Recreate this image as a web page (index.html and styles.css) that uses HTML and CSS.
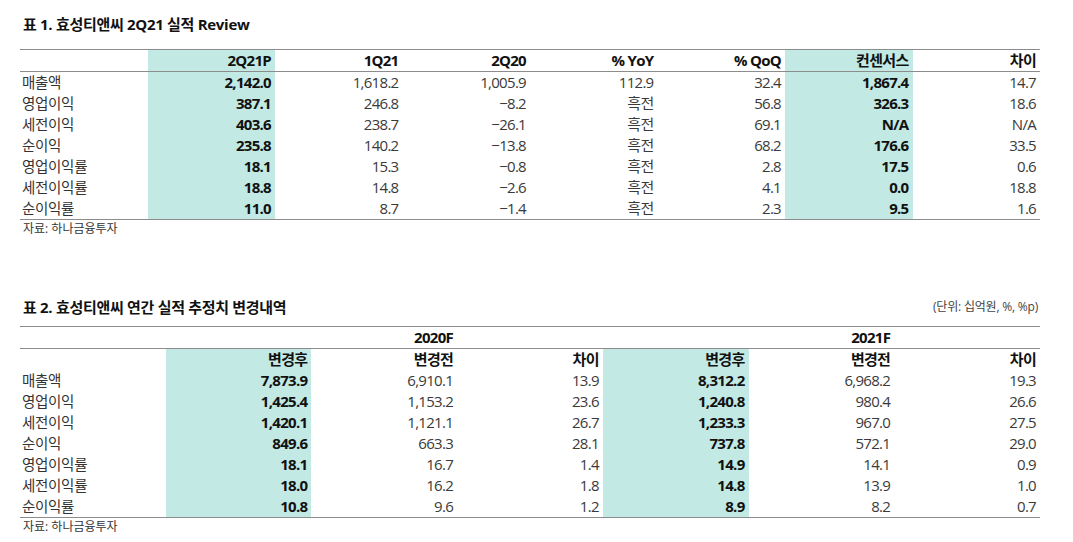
FILE: index.html
```html
<!DOCTYPE html>
<html lang="ko">
<head>
<meta charset="utf-8">
<link rel="stylesheet" href="styles.css">
</head>
<body>
<div class="page">
  <section class="block">
    <div class="title-row">
      <div class="title">표 1. 효성티앤씨 2Q21 실적 Review</div>
    </div>
    <table class="t1">
      <thead>
        <tr>
          <th class="lbl"></th>
          <th class="hl">2Q21P</th>
          <th>1Q21</th>
          <th>2Q20</th>
          <th>% YoY</th>
          <th>% QoQ</th>
          <th class="hl">컨센서스</th>
          <th>차이</th>
        </tr>
      </thead>
      <tbody>
        <tr><td class="lbl">매출액</td><td class="hl b">2,142.0</td><td>1,618.2</td><td>1,005.9</td><td>112.9</td><td>32.4</td><td class="hl b">1,867.4</td><td>14.7</td></tr>
        <tr><td class="lbl">영업이익</td><td class="hl b">387.1</td><td>246.8</td><td>−8.2</td><td>흑전</td><td>56.8</td><td class="hl b">326.3</td><td>18.6</td></tr>
        <tr><td class="lbl">세전이익</td><td class="hl b">403.6</td><td>238.7</td><td>−26.1</td><td>흑전</td><td>69.1</td><td class="hl b">N/A</td><td>N/A</td></tr>
        <tr><td class="lbl">순이익</td><td class="hl b">235.8</td><td>140.2</td><td>−13.8</td><td>흑전</td><td>68.2</td><td class="hl b">176.6</td><td>33.5</td></tr>
        <tr><td class="lbl">영업이익률</td><td class="hl b">18.1</td><td>15.3</td><td>−0.8</td><td>흑전</td><td>2.8</td><td class="hl b">17.5</td><td>0.6</td></tr>
        <tr><td class="lbl">세전이익률</td><td class="hl b">18.8</td><td>14.8</td><td>−2.6</td><td>흑전</td><td>4.1</td><td class="hl b">0.0</td><td>18.8</td></tr>
        <tr class="last"><td class="lbl">순이익률</td><td class="hl b">11.0</td><td>8.7</td><td>−1.4</td><td>흑전</td><td>2.3</td><td class="hl b">9.5</td><td>1.6</td></tr>
      </tbody>
    </table>
    <div class="source">자료: 하나금융투자</div>
  </section>

  <section class="block second">
    <div class="title-row">
      <div class="title">표 2. 효성티앤씨 연간 실적 추정치 변경내역</div>
      <div class="unit">(단위: 십억원, %, %p)</div>
    </div>
    <table class="t2">
      <thead>
        <tr class="year">
          <th class="lbl"></th>
          <th></th>
          <th>2020F</th>
          <th></th>
          <th></th>
          <th>2021F</th>
          <th></th>
        </tr>
        <tr class="sub">
          <th class="lbl"></th>
          <th class="hl">변경후</th>
          <th>변경전</th>
          <th>차이</th>
          <th class="hl">변경후</th>
          <th>변경전</th>
          <th>차이</th>
        </tr>
      </thead>
      <tbody>
        <tr><td class="lbl">매출액</td><td class="hl b">7,873.9</td><td>6,910.1</td><td>13.9</td><td class="hl b">8,312.2</td><td>6,968.2</td><td>19.3</td></tr>
        <tr><td class="lbl">영업이익</td><td class="hl b">1,425.4</td><td>1,153.2</td><td>23.6</td><td class="hl b">1,240.8</td><td>980.4</td><td>26.6</td></tr>
        <tr><td class="lbl">세전이익</td><td class="hl b">1,420.1</td><td>1,121.1</td><td>26.7</td><td class="hl b">1,233.3</td><td>967.0</td><td>27.5</td></tr>
        <tr><td class="lbl">순이익</td><td class="hl b">849.6</td><td>663.3</td><td>28.1</td><td class="hl b">737.8</td><td>572.1</td><td>29.0</td></tr>
        <tr><td class="lbl">영업이익률</td><td class="hl b">18.1</td><td>16.7</td><td>1.4</td><td class="hl b">14.9</td><td>14.1</td><td>0.9</td></tr>
        <tr><td class="lbl">세전이익률</td><td class="hl b">18.0</td><td>16.2</td><td>1.8</td><td class="hl b">14.8</td><td>13.9</td><td>1.0</td></tr>
        <tr class="last"><td class="lbl">순이익률</td><td class="hl b">10.8</td><td>9.6</td><td>1.2</td><td class="hl b">8.9</td><td>8.2</td><td>0.7</td></tr>
      </tbody>
    </table>
    <div class="source">자료: 하나금융투자</div>
  </section>
</div>
</body>
</html>
```

FILE: styles.css
```css
* { box-sizing: border-box; }

html, body {
  margin: 0;
  padding: 0;
  background: #ffffff;
}

body {
  font-family: "Open Sans", "Noto Sans CJK KR", sans-serif;
  color: #333333;
}

.page {
  width: 1073px;
  padding: 0 33px 0 20px;
}

.block {
  width: 1020px;
}

.second {
  margin-top: 59px;
}

.title-row {
  display: flex;
  justify-content: space-between;
  align-items: flex-start;
  padding: 14px 2px 0 3px;
  height: 49px;
}

.second .title-row {
  padding-top: 0;
  height: 29px;
}

.title {
  font-size: 15px;
  font-weight: 700;
  line-height: 20px;
  color: #111111;
  letter-spacing: -0.3px;
}

.unit {
  font-size: 12px;
  line-height: 20px;
  color: #444444;
  letter-spacing: -0.2px;
}

table {
  width: 1020px;
  table-layout: fixed;
  border-collapse: separate;
  border-spacing: 0;
  border-top: 1px solid #8c8c8c;
}

th, td {
  height: 21px;
  line-height: 21px;
  padding: 0 4px 0 0;
  text-align: right;
  font-size: 15px;
  white-space: nowrap;
  letter-spacing: -0.7px;
}

th {
  font-weight: 700;
  color: #111111;
}

td {
  font-weight: 400;
  color: #3a3a3a;
}

th.lbl, td.lbl {
  text-align: left;
  padding: 0 0 0 2px;
  color: #333333;
  font-size: 14.5px;
  letter-spacing: -0.3px;
}

.hl {
  background: #c2e9e3;
}

td.b {
  font-weight: 700;
  color: #111111;
}

.t1 thead th {
  border-bottom: 1px solid #8c8c8c;
}

.t2 tr.year th {
  border-bottom: 1px solid #8c8c8c;
}

tr.last td {
  border-bottom: 1px solid #8c8c8c;
}

.source {
  font-size: 12px;
  line-height: 18px;
  padding-left: 3px;
  color: #333333;
}
```
